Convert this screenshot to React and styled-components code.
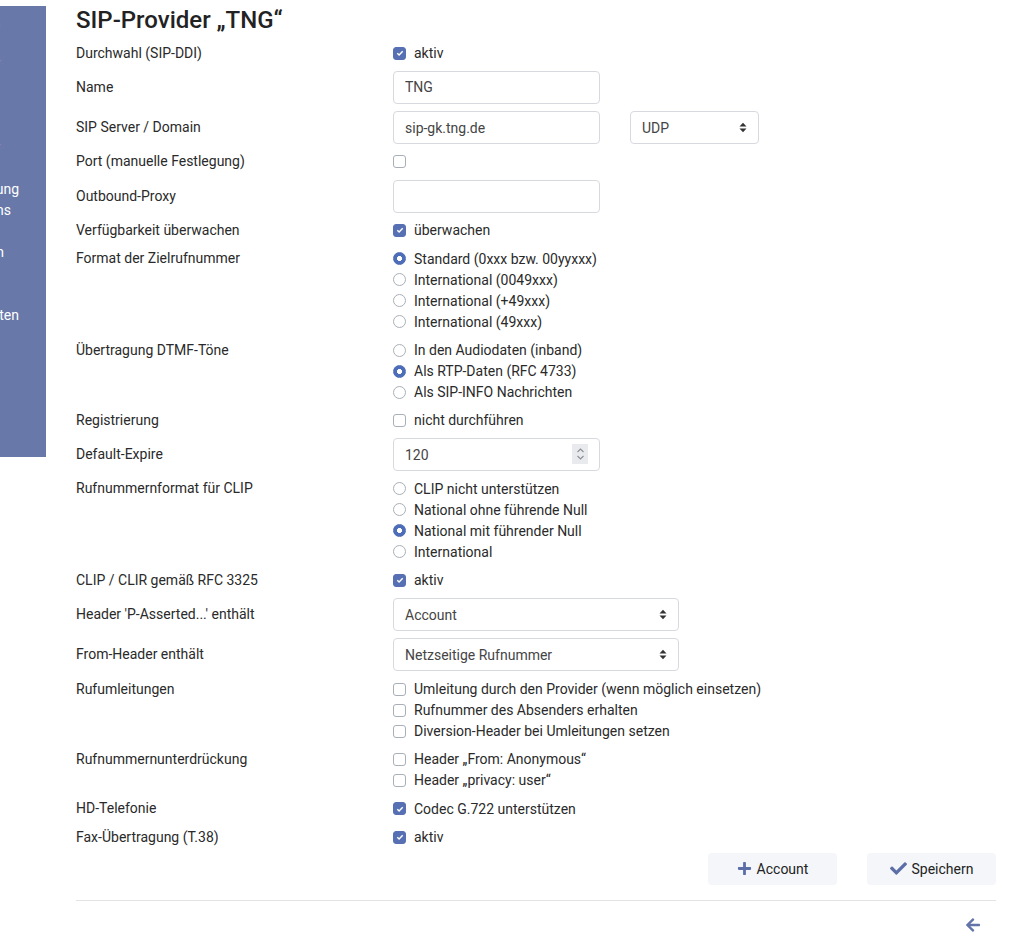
import React from "react";
import styled, { createGlobalStyle } from "styled-components";
import { FaPlus, FaCheck, FaArrowLeft } from "react-icons/fa";

const GlobalStyle = createGlobalStyle`
  html, body {
    margin: 0;
    padding: 0;
    background: #fff;
  }
  body {
    font-family: Roboto, "Liberation Sans", Arial, sans-serif;
    font-size: 14px;
    color: #2a2a2a;
  }
`;

const NAV = [
  { text: "Übersicht", end: -8 },
  { text: "Telefonie", end: -8 },
  { text: "Benutzer", end: -8 },
  { text: "Endgeräte", end: -8 },
  { text: "Anrufliste", end: -8 },
  { text: "Telefonbuch", end: -8 },
  { text: "Provider", end: -8 },
  { text: "Durchwahlen", end: -8 },
  { text: "Anrufweiterleitung", end: 19 },
  { text: "Konferenz-Sessions", end: 11 },
  { text: "Gruppen", end: -8 },
  { text: "Wartemusik-Ansagen", end: 4 },
  { text: "Fax", end: -8 },
  { text: "Voicemail", end: -8 },
  { text: "Verbindungsdaten", end: 19 },
];

function Check({ checked, children }) {
  return (
    <Option>
      <Box checked={checked}>
        {checked && (
          <svg width="8" height="8" viewBox="0 0 8 8">
            <path d="M1.3 4.2 L3.1 6 L6.7 2.2" fill="none" stroke="#fff" strokeWidth="1.4" />
          </svg>
        )}
      </Box>
      {children}
    </Option>
  );
}

function Radio({ checked, children }) {
  return (
    <Option>
      <Circle checked={checked} />
      {children}
    </Option>
  );
}

function Select({ width, value }) {
  return (
    <SelectBox $width={width}>
      {value}
      <svg width="8" height="11" viewBox="0 0 8 11">
        <path d="M0.5 4.5 L4 0.8 L7.5 4.5 Z M0.5 6.5 L4 10.2 L7.5 6.5 Z" fill="#333" />
      </svg>
    </SelectBox>
  );
}

function Field({ label, field, children }) {
  return (
    <Row>
      <Label $field={field}>{label}</Label>
      <Controls>{children}</Controls>
    </Row>
  );
}

export default function App() {
  return (
    <Page>
      <GlobalStyle />
      <Sidebar>
        {NAV.map((el, index) => (
          <NavItem key={index} $end={el.end}>
            <span>{el.text}</span>
          </NavItem>
        ))}
      </Sidebar>
      <Main>
        <Title>SIP-Provider „TNG“</Title>
        <Form>
          <Field label="Durchwahl (SIP-DDI)">
            <Check checked>aktiv</Check>
          </Field>
          <Field label="Name" field>
            <Input defaultValue="TNG" />
          </Field>
          <Field label="SIP Server / Domain" field>
            <Inline>
              <Input defaultValue="sip-gk.tng.de" />
              <Select width={129} value="UDP" />
            </Inline>
          </Field>
          <Field label="Port (manuelle Festlegung)">
            <Check />
          </Field>
          <Field label="Outbound-Proxy" field>
            <Input defaultValue="" />
          </Field>
          <Field label="Verfügbarkeit überwachen">
            <Check checked>überwachen</Check>
          </Field>
          <Field label="Format der Zielrufnummer">
            <Radio checked>Standard (0xxx bzw. 00yyxxx)</Radio>
            <Radio>International (0049xxx)</Radio>
            <Radio>International (+49xxx)</Radio>
            <Radio>International (49xxx)</Radio>
          </Field>
          <Field label="Übertragung DTMF-Töne">
            <Radio>In den Audiodaten (inband)</Radio>
            <Radio checked>Als RTP-Daten (RFC 4733)</Radio>
            <Radio>Als SIP-INFO Nachrichten</Radio>
          </Field>
          <Field label="Registrierung">
            <Check>nicht durchführen</Check>
          </Field>
          <Field label="Default-Expire" field>
            <NumberWrap>
              <Input defaultValue="120" />
              <Spinner>
                <svg width="9" height="14" viewBox="0 0 9 14">
                  <path d="M1.5 5 L4.5 2 L7.5 5 M1.5 9 L4.5 12 L7.5 9" fill="none" stroke="#8a8f96" strokeWidth="1.1" />
                </svg>
              </Spinner>
            </NumberWrap>
          </Field>
          <Field label="Rufnummernformat für CLIP">
            <Radio>CLIP nicht unterstützen</Radio>
            <Radio>National ohne führende Null</Radio>
            <Radio checked>National mit führender Null</Radio>
            <Radio>International</Radio>
          </Field>
          <Field label="CLIP / CLIR gemäß RFC 3325">
            <Check checked>aktiv</Check>
          </Field>
          <Field label="Header 'P-Asserted...' enthält" field>
            <Select width={286} value="Account" />
          </Field>
          <Field label="From-Header enthält" field>
            <Select width={286} value="Netzseitige Rufnummer" />
          </Field>
          <Field label="Rufumleitungen">
            <Check>Umleitung durch den Provider (wenn möglich einsetzen)</Check>
            <Check>Rufnummer des Absenders erhalten</Check>
            <Check>Diversion-Header bei Umleitungen setzen</Check>
          </Field>
          <Field label="Rufnummernunterdrückung">
            <Check>Header „From: Anonymous“</Check>
            <Check>Header „privacy: user“</Check>
          </Field>
          <Field label="HD-Telefonie">
            <Check checked>Codec G.722 unterstützen</Check>
          </Field>
          <Field label="Fax-Übertragung (T.38)">
            <Check checked>aktiv</Check>
          </Field>
        </Form>
        <Actions>
          <Button>
            <FaPlus size={15} />
            Account
          </Button>
          <Button>
            <FaCheck size={17} />
            Speichern
          </Button>
        </Actions>
        <Divider />
        <Footer>
          <FaArrowLeft size={16} />
        </Footer>
      </Main>
    </Page>
  );
}

const Page = styled.div`
  display: flex;
  align-items: flex-start;
  width: 1010px;
`;

const Sidebar = styled.nav`
  flex: 0 0 46px;
  height: 451px;
  margin-top: 6px;
  padding-top: 4.5px;
  box-sizing: border-box;
  background: #6878a9;
  overflow: hidden;
`;

const NavItem = styled.div`
  display: flex;
  justify-content: flex-end;
  height: 21px;
  line-height: 21px;
  padding-right: ${({ $end }) => 46 - $end}px;
  color: #fff;
  font-size: 14px;
  white-space: nowrap;

  span {
    flex: 0 0 auto;
  }
`;

const Main = styled.main`
  width: 920px;
  margin-left: 30px;
`;

const Title = styled.h1`
  margin: 0;
  padding-top: 7px;
  height: 42.5px;
  box-sizing: border-box;
  font-size: 24px;
  line-height: 26px;
  font-weight: 500;
  color: #222;
`;

const Form = styled.div`
  display: flex;
  flex-direction: column;
  gap: 7.3px;
`;

const Row = styled.div`
  display: grid;
  grid-template-columns: 317px 1fr;
  align-items: start;
`;

const Label = styled.div`
  line-height: 21px;
  padding-top: ${({ $field }) => ($field ? "6px" : "0")};
  color: #2a2a2a;
`;

const Controls = styled.div`
  display: flex;
  flex-direction: column;
`;

const Inline = styled.div`
  display: flex;
  gap: 30px;
`;

const Option = styled.div`
  display: flex;
  align-items: center;
  gap: 8px;
  height: 21px;
  color: #2a2a2a;
  white-space: nowrap;
`;

const Box = styled.span`
  display: flex;
  align-items: center;
  justify-content: center;
  width: 13px;
  height: 13px;
  box-sizing: border-box;
  border-radius: 3px;
  border: 1px solid ${({ checked }) => (checked ? "#5670b3" : "#a9afb6")};
  background: ${({ checked }) => (checked ? "#5670b3" : "#fff")};
`;

const Circle = styled.span`
  width: 13px;
  height: 13px;
  box-sizing: border-box;
  border-radius: 50%;
  border: 1px solid ${({ checked }) => (checked ? "#4e6db8" : "#a9afb6")};
  background: ${({ checked }) =>
    checked ? "radial-gradient(circle, #fff 0 2.2px, #4e6db8 2.8px)" : "#fff"};
`;

const Input = styled.input`
  width: 207px;
  height: 33px;
  box-sizing: border-box;
  padding: 0 11px;
  border: 1px solid #d6dadf;
  border-radius: 4px;
  font-family: inherit;
  font-size: 14px;
  color: #454545;
  outline: none;
`;

const NumberWrap = styled.div`
  position: relative;
  width: 207px;
`;

const Spinner = styled.span`
  position: absolute;
  left: 179px;
  top: 6px;
  width: 16px;
  height: 20px;
  display: flex;
  align-items: center;
  justify-content: center;
  background: #e9eaee;
`;

const SelectBox = styled.div`
  display: flex;
  align-items: center;
  justify-content: space-between;
  width: ${({ $width }) => $width}px;
  height: 33px;
  box-sizing: border-box;
  padding: 0 11px 0 11px;
  border: 1px solid #d6dadf;
  border-radius: 4px;
  color: #454545;
`;

const Actions = styled.div`
  display: flex;
  justify-content: flex-end;
  gap: 30px;
  margin-top: 5px;
`;

const Button = styled.button`
  display: flex;
  align-items: center;
  justify-content: center;
  gap: 5px;
  width: 129px;
  height: 32px;
  border: none;
  border-radius: 4px;
  background: #f4f6f9;
  font-family: inherit;
  font-size: 14px;
  color: #222;

  svg {
    color: #5b6ea8;
  }
`;

const Divider = styled.hr`
  margin: 15px 0 0;
  border: none;
  border-top: 1px solid #e3e3e3;
`;

const Footer = styled.div`
  display: flex;
  justify-content: flex-end;
  padding: 16px 15px 0 0;
  color: #6374a8;
`;
